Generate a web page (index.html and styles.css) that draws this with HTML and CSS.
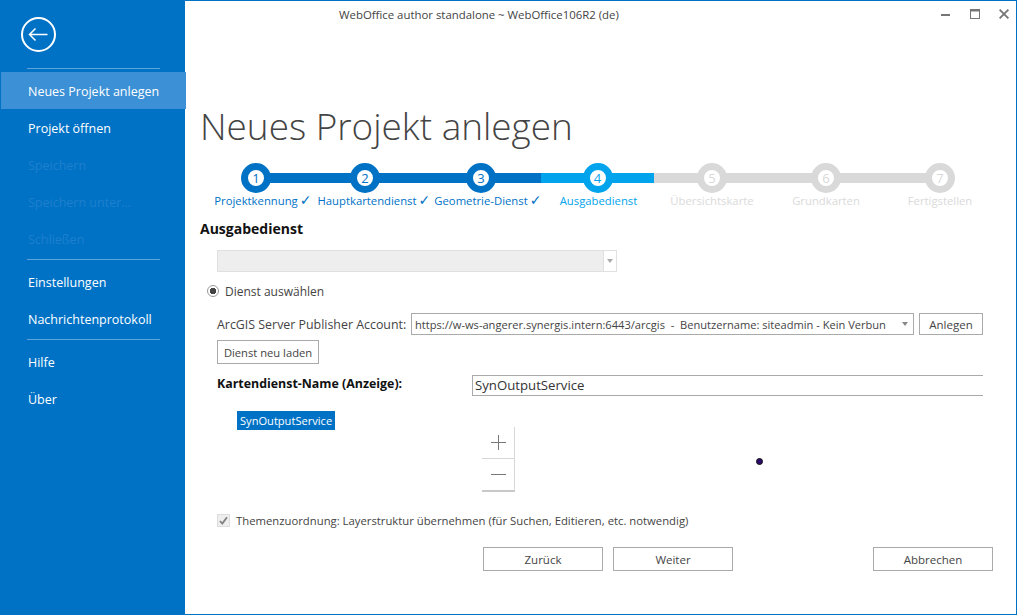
FILE: index.html
```html
<!DOCTYPE html>
<html lang="de">
<head>
<meta charset="utf-8">
<title>WebOffice author standalone</title>
<link rel="stylesheet" href="styles.css">
</head>
<body>
<div class="window">
  <aside class="sidebar">
    <div class="back">
      <svg width="36" height="36" viewBox="0 0 36 36" fill="none" stroke="#fff"><circle cx="17.5" cy="17.5" r="16.5" stroke-width="2"/><path d="M26.5 17.5H8.5M14.5 11.5l-6 6 6 6" stroke-width="1.5"/></svg>
    </div>
    <hr class="sep sep-top">
    <a class="item active">Neues Projekt anlegen</a>
    <a class="item">Projekt öffnen</a>
    <a class="item off">Speichern</a>
    <a class="item off">Speichern unter...</a>
    <a class="item off">Schließen</a>
    <hr class="sep">
    <a class="item">Einstellungen</a>
    <a class="item">Nachrichtenprotokoll</a>
    <hr class="sep">
    <a class="item">Hilfe</a>
    <a class="item">Über</a>
  </aside>
  <main class="main">
    <header class="titlebar">
      <span class="wintitle">WebOffice author standalone ~ WebOffice106R2 (de)</span>
      <div class="winctl">
        <svg class="min" width="10" height="2" viewBox="0 0 10 2"><rect width="9" height="2" fill="#767676"/></svg>
        <svg width="10" height="10" viewBox="0 0 10 10" fill="none" stroke="#767676"><rect x=".5" y=".5" width="9" height="9"/><path d="M0 1.5h10" stroke-width="2"/></svg>
        <svg width="11" height="10" viewBox="0 0 11 10" fill="none" stroke="#767676" stroke-width="1.8"><path d="M.6.6l8.8 8.8M9.4.6L.6 9.4"/></svg>
      </div>
    </header>
    <h1 class="title">Neues Projekt anlegen</h1>
    <ol class="steps">
      <li class="step s1 done"><span class="rail"><b class="dot">1</b></span><span class="lab">Projektkennung<i>✓</i></span></li>
      <li class="step s2 done"><span class="rail"><b class="dot">2</b></span><span class="lab">Hauptkartendienst<i>✓</i></span></li>
      <li class="step s3 done"><span class="rail"><b class="dot">3</b></span><span class="lab">Geometrie-Dienst<i>✓</i></span></li>
      <li class="step s4 now"><span class="rail"><b class="dot">4</b></span><span class="lab">Ausgabedienst</span></li>
      <li class="step s5"><span class="rail"><b class="dot">5</b></span><span class="lab">Übersichtskarte</span></li>
      <li class="step s6"><span class="rail"><b class="dot">6</b></span><span class="lab">Grundkarten</span></li>
      <li class="step s7"><span class="rail"><b class="dot">7</b></span><span class="lab">Fertigstellen</span></li>
    </ol>
    <h2 class="section">Ausgabedienst</h2>
    <div class="combo-off"><span class="arrowbox"><span class="tri tri-off"></span></span></div>
    <div class="radio-row"><span class="radio"></span><span class="radio-text">Dienst auswählen</span></div>
    <div class="account">
      <label class="acc-label">ArcGIS Server Publisher Account:</label>
      <div class="combo"><span class="combo-text">https://w-ws-angerer.synergis.intern:6443/arcgis&nbsp; -&nbsp; Benutzername: siteadmin - Kein Verbun</span><span class="tri"></span></div>
      <button class="btn btn-add">Anlegen</button>
    </div>
    <button class="btn btn-reload">Dienst neu laden</button>
    <div class="name-row">
      <label class="name-label">Kartendienst-Name (Anzeige):</label>
      <div class="name-input">SynOutputService</div>
    </div>
    <div class="canvas">
      <span class="node">SynOutputService</span>
      <div class="zoomctl">
        <div class="zb"><svg width="15" height="15" viewBox="0 0 15 15" stroke="#777" fill="none"><path d="M7.5 0v15M0 7.5h15"/></svg></div>
        <div class="zb"><svg width="15" height="15" viewBox="0 0 15 15" stroke="#777" fill="none"><path d="M0 7.5h15"/></svg></div>
      </div>
      <span class="pin"></span>
    </div>
    <div class="check-row">
      <span class="check"><svg width="9" height="9" viewBox="0 0 9 9" fill="none" stroke="#808080" stroke-width="1.8"><path d="M1 5l2.3 2.5L8 1.2"/></svg></span>
      <span class="check-text">Themenzuordnung: Layerstruktur übernehmen (für Suchen, Editieren, etc. notwendig)</span>
    </div>
    <footer class="actions">
      <button class="btn nav">Zurück</button>
      <button class="btn nav">Weiter</button>
      <button class="btn nav cancel">Abbrechen</button>
    </footer>
  </main>
</div>
</body>
</html>
```
FILE: styles.css
```css
* { box-sizing: border-box; }
html, body { margin: 0; height: 100%; }
body { font-family: "Open Sans", "Noto Sans", sans-serif; font-size: 11.5px; color: #444; background: #fff; overflow: hidden; }
.window { width: 1017px; height: 615px; border: 1px solid #0072c6; border-left: 0; display: flex; background: #fff; }

.sidebar { width: 185px; flex: none; background: #0072c6; color: #fff; display: flex; flex-direction: column; margin-top: -1px; margin-bottom: -1px; padding-left: 1px; }
.back { height: 68px; padding: 17px 0 0 20px; }
.sep { border: 0; height: 1px; background: #5da5dc; margin: 0 25px 0 26px; flex: none; }
.sep-top { margin-bottom: 3px; }
.item { height: 37px; line-height: 35px; padding: 2px 0 0 27px; font-size: 12.5px; color: #fff; flex: none; }
.item.active { background: #3b90d6; margin-right: -1px; }
.item.off { color: #1f7fcc; }
.sidebar .item:nth-of-type(5) + .sep { margin-top: 2px; margin-bottom: 3px; }
.sidebar .item:nth-of-type(7) + .sep { margin-top: 2px; margin-bottom: 3px; }

.main { flex: 1; min-width: 0; display: flex; flex-direction: column; padding-left: 17px; }
.titlebar { height: 30px; display: flex; justify-content: space-between; padding-top: 6px; padding-right: 6px; }
.wintitle { margin-left: 137px; color: #444; font-size: 11.4px; line-height: 16px; }
.winctl { display: flex; gap: 19px; align-items: center; height: 14px; }
.min { margin-top: 2px; }

.title { margin: 70px 0 0 -2px; font-weight: 300; font-size: 36.9px; line-height: 50px; height: 50px; color: #444; }

.steps { list-style: none; margin: 12px 0 0 1px; padding: 0; display: flex; }
.step { display: flex; flex-direction: column; align-items: center; flex: none; }
.s1 { width: 106px; } .s2 { width: 112px; } .s3 { width: 120px; } .s4 { width: 113px; }
.s5 { width: 116px; } .s6 { width: 112px; } .s7 { width: 116px; }
.rail { width: 100%; height: 30px; display: flex; justify-content: center; align-items: center;
  background: linear-gradient(#d9d9d9, #d9d9d9) center / 100% 10px no-repeat; }
.done .rail { background-image: linear-gradient(#0072c6, #0072c6); }
.now .rail { background-image: linear-gradient(#00a4ec, #00a4ec); }
.s1 .rail { background-position: right center; background-size: 50% 10px; }
.s7 .rail { background-position: left center; background-size: 50% 10px; }
.dot { width: 30px; height: 30px; border-radius: 50%; border: 7px solid #d9d9d9; background: #fff; display: flex; align-items: center; justify-content: center; font-weight: 400; font-size: 13px; color: #d9d9d9; }
.done .dot { border-color: #0072c6; color: #0072c6; }
.now .dot { border-color: #00a4ec; color: #00a4ec; }
.lab { white-space: nowrap; font-size: 11.3px; line-height: 16px; color: #dadada; }
.done .lab { color: #0072c6; padding-left: 2px; }
.s2 .lab { padding-left: 6px; }
.now .lab { color: #00a4ec; padding-left: 2px; }
.lab i { display: inline-block; width: 0; font-style: normal; font-family: "DejaVu Sans", sans-serif; font-size: 14px; line-height: 14px; margin-left: 2px; }

.section { margin: 10px 0 0 -2px; font-size: 14px; line-height: 19px; font-weight: 700; color: #111; }
.combo-off { margin: 12px 0 0 15px; width: 400px; height: 22px; background: #eee; border: 1px solid #e0e0e0; display: flex; justify-content: flex-end; }
.arrowbox { width: 13px; background: #fff; border-left: 1px solid #e0e0e0; display: flex; align-items: center; justify-content: center; }
.tri { flex: none; width: 0; height: 0; border: 3px solid transparent; border-top: 4px solid #888; border-bottom: 0; margin-right: 1px; }
.tri-off { border-top-color: #aaa; margin-right: 0; }
.radio-row { display: flex; align-items: center; margin: 11px 0 0 5px; height: 16px; gap: 6px; }
.radio { width: 12px; height: 12px; border-radius: 50%; border: 1px solid #999; background: radial-gradient(circle, #444 0 3px, #fff 3.5px); }
.radio-text { font-size: 12px; }

.account { display: flex; align-items: center; margin: 14px 0 0 15px; width: 766px; height: 22px; }
.acc-label { width: 194px; flex: none; white-space: nowrap; font-size: 12.4px; }
.combo { width: 503px; height: 22px; border: 1px solid #aaa; flex: none; display: flex; align-items: center; justify-content: space-between; padding: 0 4px 0 3px; white-space: nowrap; }
.combo-text { overflow: hidden; font-size: 11.1px; }
.btn { font: inherit; color: #444; background: #fff; border: 1px solid #aaa; padding: 0; }
.btn-add { margin-left: 5px; width: 64px; height: 22px; }
.btn-reload { margin: 5px 0 0 15px; width: 102px; height: 24px; font-size: 11.2px; }
.name-row { display: flex; margin: 11px 0 0 15px; height: 21px; }
.name-label { width: 255px; flex: none; font-weight: 700; font-size: 12.4px; line-height: 18px; color: #111; }
.name-input { width: 511px; height: 21px; border: 1px solid #aaa; border-right: 0; font-size: 13.2px; line-height: 19px; padding-left: 2px; color: #333; }
.canvas { position: relative; height: 116px; padding: 15px 0 0 35px; }
.node { display: inline-block; background: #0072c6; color: #fff; padding: 0 3px; height: 19px; line-height: 19px; font-size: 11.1px; }
.zoomctl { position: absolute; left: 280px; top: 31px; width: 33px; border-right: 1px solid #d8d8d8; border-bottom: 2px solid #c8c8c8; }
.zb { height: 31px; display: flex; align-items: center; justify-content: center; padding-bottom: 1px; }
.zb + .zb { height: 32px; border-top: 1px solid #d8d8d8; }
.pin { position: absolute; left: 554px; top: 62px; width: 7px; height: 7px; border-radius: 50%; background: #2a0a6a; border: 1px solid #111; }
.check-row { display: flex; align-items: center; margin: 0 0 0 15px; height: 16px; gap: 6px; }
.check { width: 13px; height: 13px; background: #eee; border: 1px solid #ddd; display: flex; align-items: center; justify-content: center; }
.check-text { font-size: 11.3px; }
.actions { display: flex; margin: 19px 0 0 281px; gap: 10px; }
.nav { width: 120px; height: 24px; }
.cancel { margin-left: 130px; }
```
